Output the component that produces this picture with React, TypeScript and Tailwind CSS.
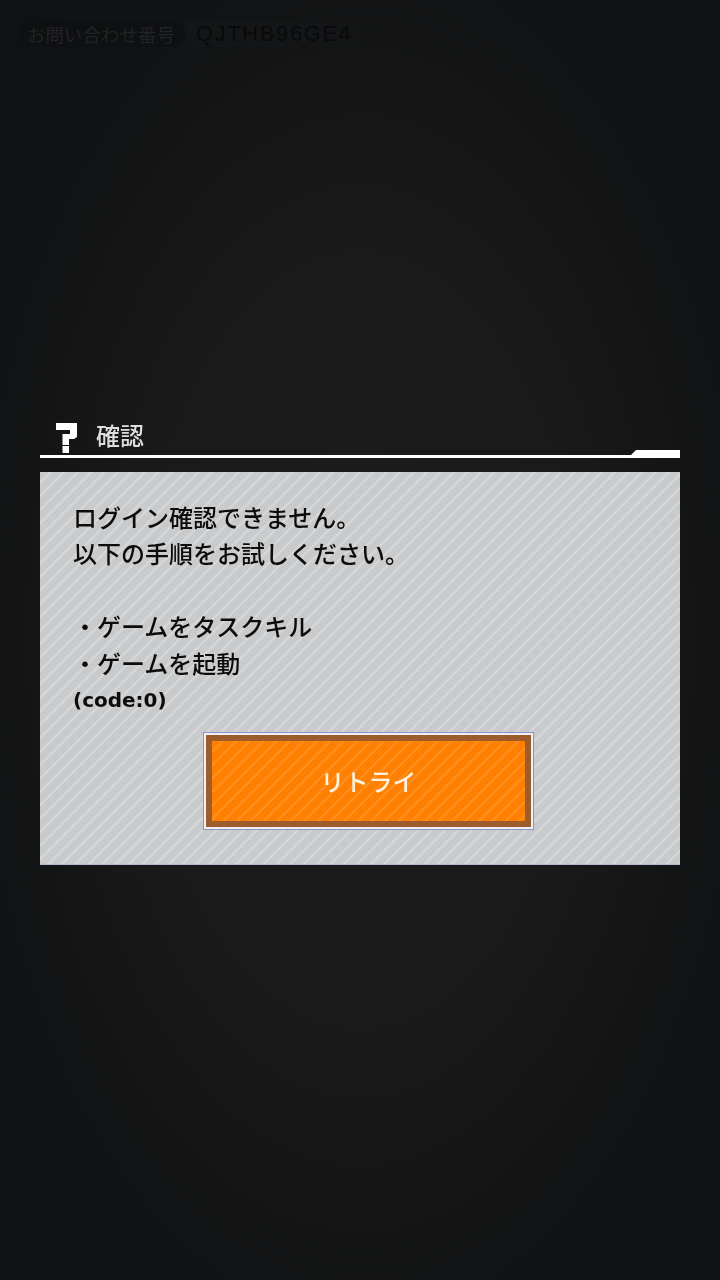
export default function App() {
  const jp = "font-['Noto_Sans_CJK_JP','Noto_Sans',sans-serif]";
  return (
    <div className={`w-[720px] h-[1280px] overflow-hidden flex flex-col ${jp} bg-[radial-gradient(ellipse_at_center,#1c1c1c_0%,#1a1a1a_42%,#121314_72%,#101112_100%)]`}>
      <div className="h-[26px] mt-[21px] ml-[20px] flex items-stretch">
        <div className="w-[165px] rounded-r-full bg-[#0f1011] pl-[7px] flex items-center text-[18.5px] leading-none text-[#222324] whitespace-nowrap blur-[0.5px]">お問い合わせ番号</div>
        <div className="w-[175px] bg-[#141516] pl-[11px] flex items-center text-[22px] tracking-[1.6px] leading-none text-[#090a0b] font-['Liberation_Sans',sans-serif] blur-[0.5px]">QJTHB96GE4</div>
      </div>

      <div className="mt-[373px] mx-[40px] relative h-[38px]">
        <div className="flex items-center h-[35px] pl-[16px]">
          <svg width="22" height="32" viewBox="0 0 22 32" className="shrink-0">
            <path fill="#fff" d="M0 1H21V15L18 17H13V23H6.5V12H14V8H0Z" />
            <path fill="#fff" d="M6.5 24H13V31H6.5Z" />
          </svg>
          <span className="ml-[18px] mb-[6px] text-[24px] leading-none font-medium text-[#dedede] blur-[0.4px]">確認</span>
        </div>
        <div className="h-[3px] bg-white" />
        <svg width="52" height="9" viewBox="0 0 52 9" className="absolute right-0 top-[29px]">
          <path fill="#fff" d="M0 9L8 1H52V9Z" />
        </svg>
      </div>

      <div className="mt-[14px] mx-[40px] h-[393px] border-b border-[#b4b6d2] pt-[27px] pl-[33px] bg-[#cacbcc] bg-[repeating-linear-gradient(135deg,#c9cacb_0px,#c9cacb_6px,#d9dadb_7.75px,#c9cacb_9.5px)] text-[#0c0c0c]">
        <div className="text-[24px] leading-[36.4px] font-medium whitespace-pre blur-[0.3px]">
          <p>ログイン確認できません。</p>
          <p>以下の手順をお試しください。</p>
          <p>&nbsp;</p>
          <p>・ゲームをタスクキル</p>
          <p>・ゲームを起動</p>
        </div>
        <p className="text-[20px] leading-[28px] mt-[5px] font-bold font-['DejaVu_Sans',sans-serif] blur-[0.3px]">(code:0)</p>
        <div className="mt-[18px] ml-[130px] w-[331px] h-[98px] border border-[#8e92c4] bg-[#f0f0f6] p-[2px]">
          <div className="w-full h-full border-[6px] border-[#9c5c2c] bg-[#ff8000] bg-[repeating-linear-gradient(135deg,#ff7f00_0px,#ff7f00_6px,#ff9426_7.75px,#ff7f00_9.5px)] flex items-center justify-center">
            <span className="text-[24px] leading-none font-medium text-[#fff3e0] blur-[0.3px]">リトライ</span>
          </div>
        </div>
      </div>
    </div>
  );
}
